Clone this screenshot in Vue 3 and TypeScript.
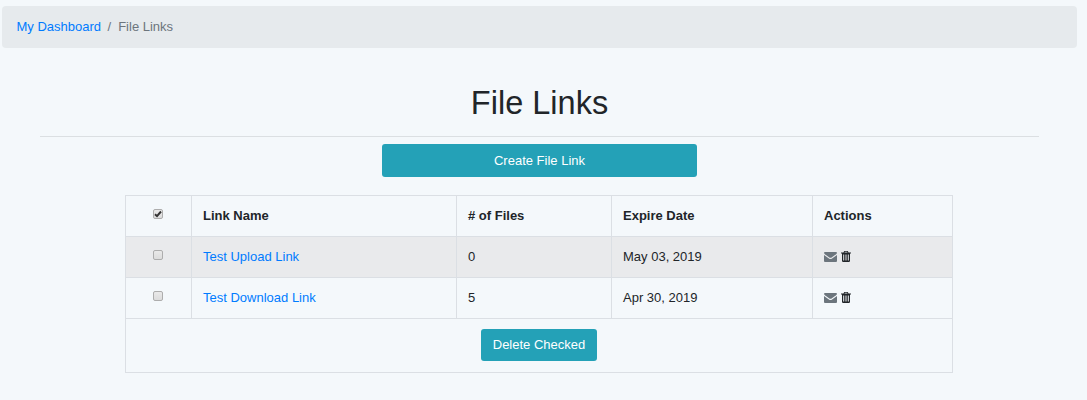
<script setup lang="ts">
import { ref } from 'vue'

interface FileLink {
  name: string
  files: number
  expires: string
  checked: boolean
}

const allChecked = ref(true)
const links = ref<FileLink[]>([
  { name: 'Test Upload Link', files: 0, expires: 'May 03, 2019', checked: false },
  { name: 'Test Download Link', files: 5, expires: 'Apr 30, 2019', checked: false },
])
</script>

<template>
  <div class="page">
    <nav class="breadcrumb">
      <a href="#">My Dashboard</a>
      <span class="sep">/</span>
      <span>File Links</span>
    </nav>
    <main class="content">
      <h1>File Links</h1>
      <hr />
      <button class="btn create">Create File Link</button>
      <table>
        <colgroup>
          <col class="c-check" />
          <col class="c-name" />
          <col class="c-files" />
          <col class="c-date" />
          <col class="c-actions" />
        </colgroup>
        <thead>
          <tr>
            <th class="check"><input v-model="allChecked" type="checkbox" /></th>
            <th>Link Name</th>
            <th># of Files</th>
            <th>Expire Date</th>
            <th>Actions</th>
          </tr>
        </thead>
        <tbody>
          <tr v-for="link in links" :key="link.name">
            <td class="check"><input v-model="link.checked" type="checkbox" /></td>
            <td><a href="#">{{ link.name }}</a></td>
            <td>{{ link.files }}</td>
            <td>{{ link.expires }}</td>
            <td>
              <div class="actions">
                <svg class="mail" width="13" height="10" viewBox="0 0 13 10">
                  <path d="M1 0h11Q13 0 13 1 13 1.5 12 2.3L7.6 5.4Q6.5 6.1 5.4 5.4L1 2.3Q0 1.5 0 1 0 0 1 0z" />
                  <path d="M0 3.1L4.9 6.6Q6.5 7.6 8.1 6.6L13 3.1V9Q13 10 12 10H1Q0 10 0 9z" />
                </svg>
                <svg class="trash" width="10" height="11" viewBox="0 0 10 11">
                  <path
                    fill-rule="evenodd"
                    d="M3.2 0h3.6l.7 1.5H10v1H9V9.7Q9 11 7.8 11H2.2Q1 11 1 9.7V2.5H0v-1h2.5zM3.8.8l-.3.7h3l-.3-.7zM2.2 3.5v6h1v-6zM4.5 3.5v6h1v-6zM6.8 3.5v6h1v-6z"
                  />
                </svg>
              </div>
            </td>
          </tr>
          <tr class="footer">
            <td colspan="5"><button class="btn delete">Delete Checked</button></td>
          </tr>
        </tbody>
      </table>
    </main>
  </div>
</template>

<style>
body {
  margin: 0;
  background: #f4f8fb;
}
</style>

<style scoped>
.page {
  box-sizing: border-box;
  height: 400px;
  padding: 6px 10px 0 2px;
  overflow: hidden;
  background: #f4f8fb;
  color: #212529;
  font: 13px/19.5px "Liberation Sans", Arial, sans-serif;
}
a {
  color: #007bff;
  text-decoration: none;
}
.breadcrumb {
  display: flex;
  align-items: center;
  box-sizing: border-box;
  height: 42px;
  padding: 0 14.5px;
  border-radius: 4px;
  background: #e6eaed;
  color: #6c757d;
}
.sep {
  padding: 0 7px 0 6.5px;
}
.content {
  display: flex;
  flex-direction: column;
  align-items: center;
  padding: 36px 38px 0;
}
h1 {
  margin: 0;
  font-size: 32.5px;
  font-weight: 400;
  line-height: 39px;
}
hr {
  width: 100%;
  height: 1px;
  margin: 13px 0 7px;
  border: 0;
  background: #dbdfe2;
}
.btn {
  box-sizing: border-box;
  padding: 0;
  border: 0;
  border-radius: 3px;
  background: #24a1b7;
  color: #fff;
  font: inherit;
}
.create {
  width: 315px;
  height: 33px;
  margin-bottom: 18px;
}
table {
  width: 828px;
  margin-right: 1px;
  border-collapse: collapse;
  table-layout: fixed;
}
.c-check { width: 66px; }
.c-name { width: 265px; }
.c-files { width: 155px; }
.c-date { width: 201px; }
.c-actions { width: 140px; }
tr {
  height: 41px;
}
th,
td {
  box-sizing: border-box;
  padding: 0 11px;
  border: 1px solid #dbdfe4;
  text-align: left;
  vertical-align: middle;
}
tbody tr:first-child {
  background: #e9eaec;
}
th.check,
td.check {
  padding: 0 12px 0 10px;
}
input {
  appearance: none;
  display: block;
  box-sizing: border-box;
  width: 10px;
  height: 10px;
  margin: 0 auto 4px;
  border: 1px solid #adadad;
  border-radius: 2px;
  background: linear-gradient(#e9e9e9, #dcdcdc);
}
input:checked {
  background:
    url("data:image/svg+xml,%3Csvg xmlns='http://www.w3.org/2000/svg' viewBox='0 0 8 8'%3E%3Cpath d='M1 4.200L3 6.100 7 1.500' fill='none' stroke='%23333' stroke-width='2'/%3E%3C/svg%3E"),
    linear-gradient(#e9e9e9, #dcdcdc);
}
.actions {
  display: flex;
  align-items: flex-start;
  gap: 4px;
  padding-bottom: 2px;
}
.mail {
  margin-top: 1px;
  fill: #6c757d;
}
.trash {
  fill: #212529;
}
.footer {
  height: 54px;
}
.footer td {
  padding-bottom: 1px;
}
.delete {
  display: block;
  width: 116px;
  height: 32px;
  margin: 0 auto;
}
</style>
